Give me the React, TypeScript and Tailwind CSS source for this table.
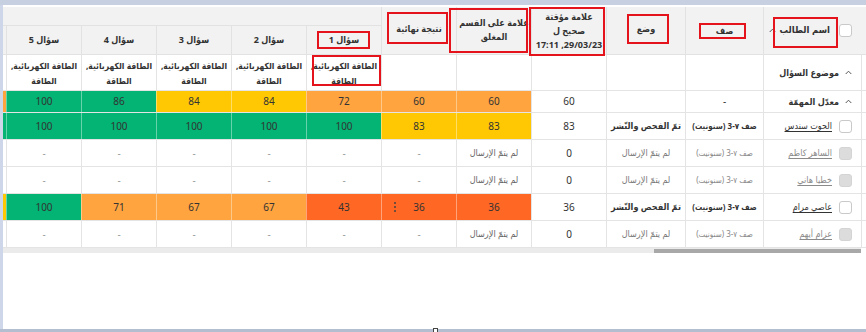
import clsx from "clsx";

type Val = { v: string; c?: string; dots?: boolean; muted?: boolean };

interface StudentRow {
  name: string;
  active: boolean;
  status: string;
  temp: string;
  closed: Val;
  final: Val;
  qs: Val[];
}

const G = "bg-[#03b474]";
const Y = "bg-[#ffc803]";
const O = "bg-[#ffa43f]";
const R = "bg-[#ff6724]";

const NOT_SENT = "لم يتمّ الإرسال";
const DONE = "تمّ الفحص والنّشر";
const dash: Val = { v: "-", muted: true };
// the sixth question column is scrolled almost out of view, only its colour shows
const hidden: Val = { v: "" };

const rows: StudentRow[] = [
  {
    name: "الحوت سندس",
    active: true,
    status: DONE,
    temp: "83",
    closed: { v: "83", c: Y },
    final: { v: "83", c: Y },
    qs: [
      { v: "100", c: G },
      { v: "100", c: G },
      { v: "100", c: G },
      { v: "100", c: G },
      { v: "100", c: G },
      { v: "", c: G },
    ],
  },
  {
    name: "الساهر كاظم",
    active: false,
    status: NOT_SENT,
    temp: "0",
    closed: { v: NOT_SENT },
    final: dash,
    qs: [dash, dash, dash, dash, dash, hidden],
  },
  {
    name: "خطيا هاني",
    active: false,
    status: NOT_SENT,
    temp: "0",
    closed: { v: NOT_SENT },
    final: dash,
    qs: [dash, dash, dash, dash, dash, hidden],
  },
  {
    name: "عاصي مرام",
    active: true,
    status: DONE,
    temp: "36",
    closed: { v: "36", c: R },
    final: { v: "36", c: R, dots: true },
    qs: [
      { v: "43", c: R },
      { v: "67", c: O },
      { v: "67", c: O },
      { v: "71", c: O },
      { v: "100", c: G },
      { v: "", c: Y },
    ],
  },
  {
    name: "عزام أيهم",
    active: false,
    status: NOT_SENT,
    temp: "0",
    closed: { v: NOT_SENT },
    final: dash,
    qs: [dash, dash, dash, dash, dash, hidden],
  },
];

const avg: Val[] = [
  { v: "72", c: O },
  { v: "84", c: Y },
  { v: "84", c: Y },
  { v: "86", c: G },
  { v: "100", c: G },
  { v: "", c: O },
];

function Chevron() {
  return (
    <svg width="7" height="5" viewBox="0 0 7 5" className="shrink-0">
      <polyline points="0.7,4 3.5,1.2 6.3,4" fill="none" stroke="#555" strokeWidth="1" />
    </svg>
  );
}

function Checkbox({ disabled }: { disabled?: boolean }) {
  return (
    <span
      className={clsx(
        "h-[13px] w-[13px] shrink-0 rounded-[3px] border",
        disabled ? "border-[#d4d4d4] bg-[#dcdcdc]" : "border-[#c9c9c9] bg-white"
      )}
    />
  );
}

function Score({ val }: { val: Val }) {
  return (
    <div
      className={clsx(
        "relative flex h-full w-[75px] shrink-0 items-center justify-center whitespace-nowrap border-l",
        val.c ? clsx(val.c, "border-white/40") : "border-[#e4e4e4]",
        val.muted && "text-[#9a9a9a]",
        !val.c && !val.muted && val.v === NOT_SENT && "text-[9px] text-[#666]"
      )}
    >
      {val.dots && (
        <span className="absolute left-[12px] top-1/2 flex -translate-y-1/2 flex-col gap-[2px]">
          <span className="h-[2px] w-[2px] rounded-full bg-[#444]" />
          <span className="h-[2px] w-[2px] rounded-full bg-[#444]" />
          <span className="h-[2px] w-[2px] rounded-full bg-[#444]" />
        </span>
      )}
      {val.v}
    </div>
  );
}

const QUESTIONS = [1, 2, 3, 4, 5];

function Table() {
  return (
    <div className="flex w-[863px] flex-col">
      {/* header */}
      <div dir="rtl" className="flex h-[48px] shrink-0 overflow-hidden whitespace-nowrap border-b border-[#e2e2e2] bg-[#f2f2f2] text-[9px] font-bold">
        <div className="w-[5px] shrink-0" />
        <div className="flex w-[98px] shrink-0 items-center gap-[9px] border-l border-[#e2e2e2] pr-[9px]">
          <Checkbox />
          <span className="text-[9.5px]">اسم الطالب</span>
          <span className="-mr-[5px]">
            <Chevron />
          </span>
        </div>
        <div className="flex w-[78px] shrink-0 items-center justify-center border-l border-[#e2e2e2]">صف</div>
        <div className="flex w-[79px] shrink-0 items-center justify-center border-l border-[#e2e2e2] pb-[3px]">وضع</div>
        <div className="flex w-[75px] shrink-0 flex-col items-center justify-center border-l border-[#e2e2e2] text-center leading-[14px]">
          <span>علامة مؤقتة</span>
          <span>صحيح ل</span>
          <span dir="ltr" className="text-[9px]">17:11 ,29/03/23</span>
        </div>
        <div className="flex w-[75px] shrink-0 flex-col items-center justify-center border-l border-[#e2e2e2] pb-[2px] text-center leading-[14px]">
          <span>علامة على القسم</span>
          <span>المغلق</span>
        </div>
        <div className="flex w-[75px] shrink-0 items-center justify-center border-l border-[#e2e2e2] pb-[3px]">نتيجة نهائية</div>
        <div className="flex w-[450px] shrink-0 flex-col">
          <div className="h-[19px] shrink-0 border-b border-[#e2e2e2]" />
          <div className="flex flex-1">
            {QUESTIONS.map((n) => (
              <div key={n} className="flex w-[75px] shrink-0 items-center justify-center border-l border-[#e2e2e2]">
                سؤال {n}
              </div>
            ))}
            <div className="w-[75px] shrink-0 border-l border-[#e2e2e2]" />
          </div>
        </div>
      </div>

      {/* topic row */}
      <div dir="rtl" className="flex h-[36px] shrink-0 overflow-hidden whitespace-nowrap border-b border-[#e4e4e4] text-[9px]">
        <div className="w-[5px] shrink-0 border-l border-[#e4e4e4]" />
        <div className="flex w-[98px] shrink-0 items-center gap-[6px] border-l border-[#e4e4e4] pr-[9px] font-bold">
          <Chevron />
          <span>موضوع السؤال</span>
        </div>
        <div className="w-[78px] shrink-0 border-l border-[#e4e4e4]" />
        <div className="w-[79px] shrink-0 border-l border-[#e4e4e4]" />
        <div className="w-[75px] shrink-0 border-l border-[#e4e4e4]" />
        <div className="w-[75px] shrink-0 border-l border-[#e4e4e4]" />
        <div className="w-[75px] shrink-0 border-l border-[#e4e4e4]" />
        {QUESTIONS.map((n) => (
          <div
            key={n}
            className="flex w-[75px] shrink-0 flex-col items-center justify-center border-l border-[#e4e4e4] text-center text-[8.5px] font-bold leading-[15px]"
          >
            <span>الطاقة الكهربائية,</span>
            <span>الطاقة</span>
          </div>
        ))}
        <div className="w-[75px] shrink-0 border-l border-[#e4e4e4]" />
      </div>

      {/* average row */}
      <div dir="rtl" className="flex h-[22px] shrink-0 overflow-hidden whitespace-nowrap border-b border-[#e4e4e4]">
        <div className="w-[5px] shrink-0 border-l border-[#e4e4e4]" />
        <div className="flex w-[98px] shrink-0 items-center gap-[6px] border-l border-[#e4e4e4] pr-[9px] text-[9px] font-bold">
          <Chevron />
          <span>معدّل المهمّة</span>
        </div>
        <div className="flex w-[78px] shrink-0 items-center justify-center border-l border-[#e4e4e4]">-</div>
        <div className="w-[79px] shrink-0 border-l border-[#e4e4e4]" />
        <div className="flex w-[75px] shrink-0 items-center justify-center border-l border-[#e4e4e4]">60</div>
        <Score val={{ v: "60", c: O }} />
        <Score val={{ v: "60", c: O }} />
        {avg.map((a, i) => (
          <Score key={i} val={a} />
        ))}
      </div>

      {/* student rows */}
      {rows.map((r) => (
        <div key={r.name} dir="rtl" className="flex h-[27px] shrink-0 overflow-hidden whitespace-nowrap border-b border-[#e4e4e4]">
          <div className="w-[5px] shrink-0 border-l border-[#e4e4e4]" />
          <div className="flex w-[98px] shrink-0 items-center gap-[7px] border-l border-[#e4e4e4] pr-[9px] text-[9px]">
            <Checkbox disabled={!r.active} />
            <span className={clsx("underline underline-offset-2", r.active ? "text-[#333]" : "text-[#8a8a8a]")}>
              {r.name}
            </span>
          </div>
          <div
            className={clsx(
              "flex w-[78px] shrink-0 items-center justify-center border-l border-[#e4e4e4] text-[8px]",
              r.active ? "font-bold text-[#333]" : "text-[#888]"
            )}
          >
            صف ٧-3 (سنونيت)
          </div>
          <div
            className={clsx(
              "flex w-[79px] shrink-0 items-center justify-center border-l border-[#e4e4e4] text-[9px]",
              r.active ? "font-bold text-[#333]" : "text-[#777]"
            )}
          >
            {r.status}
          </div>
          <div className="flex w-[75px] shrink-0 items-center justify-center border-l border-[#e4e4e4]">{r.temp}</div>
          <Score val={r.closed} />
          <Score val={r.final} />
          {r.qs.map((q, i) => (
            <Score key={i} val={q} />
          ))}
        </div>
      ))}

      {/* horizontal scrollbar */}
      <div className="flex h-[5px] w-[858px] shrink-0 justify-end bg-[#ebebeb]">
        <div className="h-[4px] w-[207px] self-end bg-[#a8a8a8]" />
      </div>
    </div>
  );
}

const boxes = [
  "left-[773px] top-[17px] w-[65px] h-[31px]",
  "left-[699px] top-[23px] w-[47px] h-[16px]",
  "left-[627px] top-[14px] w-[42px] h-[30px]",
  "left-[529px] top-[7px] w-[76px] h-[49px]",
  "left-[449px] top-[8px] w-[79px] h-[45px]",
  "left-[387px] top-[12px] w-[61px] h-[32px]",
  "left-[317px] top-[31px] w-[53px] h-[18px]",
  "left-[312px] top-[55px] w-[69px] h-[31px]",
];

export default function App() {
  return (
    <div className="relative flex h-[332px] w-[866px] flex-col overflow-hidden bg-[#c6d0e1] font-['Noto_Sans','DejaVu_Sans_Condensed','DejaVu_Sans',sans-serif] text-[10px] text-[#333]">
      <div className="h-[5px] shrink-0" />
      <div className="flex min-h-0 flex-1">
        <div className="w-[3px] shrink-0 bg-[#cdd7e9]" />
        <div className="flex flex-1 flex-col bg-white pt-[2px]">
          <Table />
        </div>
      </div>
      <div className="flex h-[3px] shrink-0 bg-[#b3bed0]">
        <div className="-mt-[1px] ml-[433px] h-[5px] w-[5px] border border-[#444] bg-white" />
      </div>
      {boxes.map((b) => (
        <div key={b} className={clsx("pointer-events-none absolute border-2 border-[#e5141c]", b)} />
      ))}
    </div>
  );
}
